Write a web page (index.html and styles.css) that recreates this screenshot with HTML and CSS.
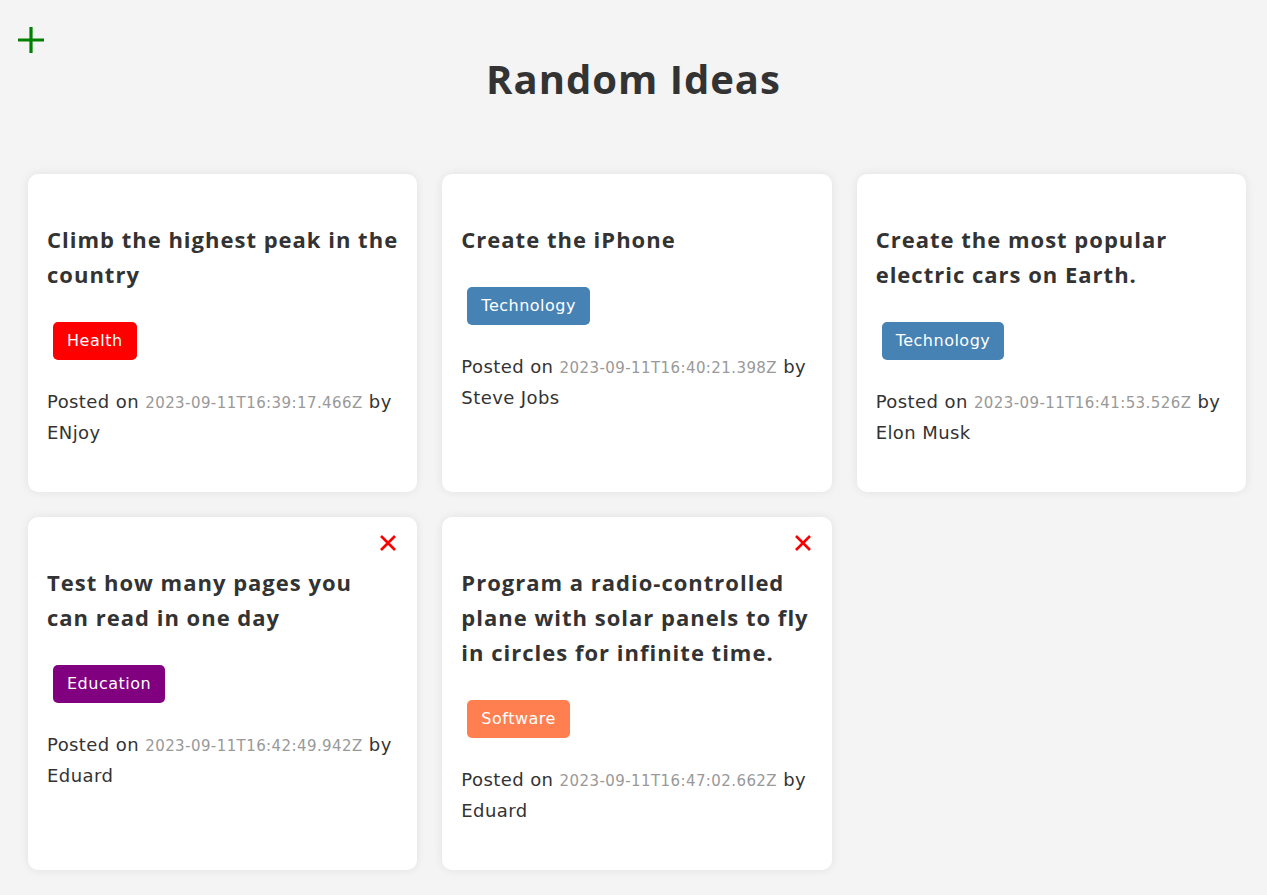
FILE: index.html
```html
<!DOCTYPE html>
<html lang="en">
<head>
<meta charset="UTF-8">
<title>Random Ideas</title>
<link rel="stylesheet" href="styles.css">
</head>
<body>
<header class="header">
  <button class="add-btn" aria-label="Add idea">
    <svg width="28" height="28" viewBox="0 0 28 28"><path d="M14 1V27M1 14H27" stroke="#008000" stroke-width="3.2" fill="none"/></svg>
  </button>
  <h1 class="title">Random Ideas</h1>
</header>
<main class="ideas">
  <div class="card">
    <h3 class="card-title">Climb the highest peak in the<br>country</h3>
    <p class="tag-row"><span class="tag tag-health">Health</span></p>
    <p class="meta">Posted on <span class="date">2023-09-11T16:39:17.466Z</span> by <span class="author">ENjoy</span></p>
  </div>
  <div class="card">
    <h3 class="card-title">Create the iPhone</h3>
    <p class="tag-row"><span class="tag tag-technology">Technology</span></p>
    <p class="meta">Posted on <span class="date">2023-09-11T16:40:21.398Z</span> by <span class="author">Steve Jobs</span></p>
  </div>
  <div class="card">
    <h3 class="card-title">Create the most popular<br>electric cars on Earth.</h3>
    <p class="tag-row"><span class="tag tag-technology">Technology</span></p>
    <p class="meta">Posted on <span class="date">2023-09-11T16:41:53.526Z</span> by <span class="author">Elon Musk</span></p>
  </div>
  <div class="card">
    <button class="delete" aria-label="Delete"><svg width="18" height="18" viewBox="0 0 18 18"><path d="M2 2L16 16M16 2L2 16" stroke="#ff0000" stroke-width="2.6" fill="none"/></svg></button>
    <h3 class="card-title">Test how many pages you<br>can read in one day</h3>
    <p class="tag-row"><span class="tag tag-education">Education</span></p>
    <p class="meta">Posted on <span class="date">2023-09-11T16:42:49.942Z</span> by <span class="author">Eduard</span></p>
  </div>
  <div class="card">
    <button class="delete" aria-label="Delete"><svg width="18" height="18" viewBox="0 0 18 18"><path d="M2 2L16 16M16 2L2 16" stroke="#ff0000" stroke-width="2.6" fill="none"/></svg></button>
    <h3 class="card-title">Program a radio-controlled<br>plane with solar panels to fly<br>in circles for infinite time.</h3>
    <p class="tag-row"><span class="tag tag-software">Software</span></p>
    <p class="meta">Posted on <span class="date">2023-09-11T16:47:02.662Z</span> by <span class="author">Eduard</span></p>
  </div>
</main>
</body>
</html>
```
FILE: styles.css
```css
* { box-sizing: border-box; }
body {
  margin: 0;
  background: #f4f4f4;
  color: #333;
  font-family: "DejaVu Sans", "Open Sans", sans-serif;
}
.header {
  padding-top: 26px;
}
.add-btn {
  display: block;
  margin-left: 17px;
  padding: 0;
  border: none;
  background: none;
  width: 28px;
  height: 28px;
  cursor: pointer;
}
.add-btn svg { display: block; }
.title {
  margin: 1px 0 71px;
  text-align: center;
  font-family: "Open Sans", "Noto Sans", sans-serif;
  font-size: 40px;
  line-height: 48px;
  font-weight: 700;
  letter-spacing: 1px;
}
.ideas {
  display: grid;
  grid-template-columns: repeat(3, 1fr);
  gap: 25px 25px;
  padding: 0 21px 26px 28px;
}
.card {
  position: relative;
  background: #fff;
  border-radius: 10px;
  box-shadow: 0 0 10px rgba(0,0,0,0.08);
  padding: 48px 19px 44px;
}
.delete {
  position: absolute;
  top: 17px;
  right: 20px;
  padding: 0;
  border: none;
  background: none;
  cursor: pointer;
}
.delete svg { display: block; }
.card-title {
  margin: 0;
  font-family: "Open Sans", "Noto Sans", sans-serif;
  font-size: 22px;
  line-height: 35px;
  font-weight: 700;
  letter-spacing: 1px;
  white-space: nowrap;
}
.tag-row {
  margin: 30px 0 27px 6px;
  line-height: 0;
}
.tag {
  display: inline-block;
  padding: 0 14px;
  height: 38px;
  line-height: 38px;
  border-radius: 5px;
  color: #fff;
  font-size: 16px;
  letter-spacing: 0.5px;
}
.tag-health { background: #ff0000; }
.tag-technology { background: #4682b4; }
.tag-education { background: #800080; }
.tag-software { background: #ff7f50; }
.meta {
  margin: 0;
  font-size: 18px;
  line-height: 30px;
  font-weight: 400;
  letter-spacing: 0.42px;
}
.date {
  color: #999;
  font-size: 15px;
}
```
